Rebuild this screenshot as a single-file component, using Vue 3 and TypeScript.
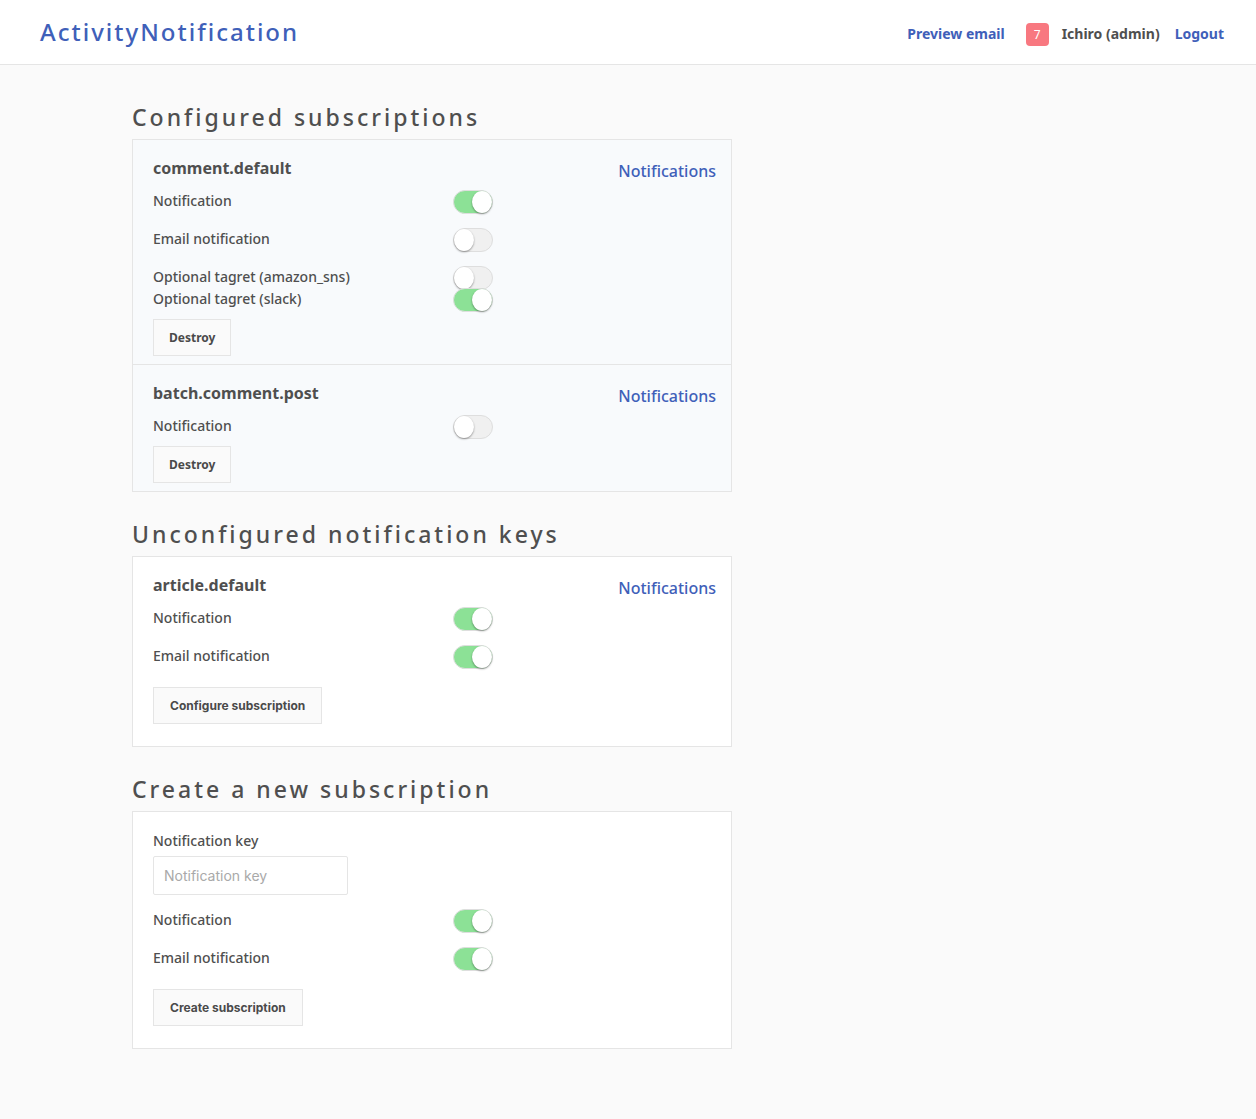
<script setup lang="ts">
import { reactive, ref } from 'vue'

interface Option {
  id: string
  label: string
  on: boolean
}

interface Subscription {
  key: string
  options: Option[]
  targets: Option[]
}

const configured = reactive<Subscription[]>([
  {
    key: 'comment.default',
    options: [
      { id: 'comment-notification', label: 'Notification', on: true },
      { id: 'comment-email', label: 'Email notification', on: false },
    ],
    targets: [
      { id: 'comment-sns', label: 'Optional tagret (amazon_sns)', on: false },
      { id: 'comment-slack', label: 'Optional tagret (slack)', on: true },
    ],
  },
  {
    key: 'batch.comment.post',
    options: [{ id: 'batch-notification', label: 'Notification', on: false }],
    targets: [],
  },
])

const unconfigured = reactive<Subscription[]>([
  {
    key: 'article.default',
    options: [
      { id: 'article-notification', label: 'Notification', on: true },
      { id: 'article-email', label: 'Email notification', on: true },
    ],
    targets: [],
  },
])

const newOptions = reactive<Option[]>([
  { id: 'new-notification', label: 'Notification', on: true },
  { id: 'new-email', label: 'Email notification', on: true },
])

const newKey = ref('')
const unread = ref(7)
</script>

<template>
  <div class="page">
    <header class="header">
      <a class="brand" href="#">ActivityNotification</a>
      <nav class="nav">
        <a href="#">Preview email</a>
        <span class="badge">{{ unread }}</span>
        <span class="user">Ichiro (admin)</span>
        <a href="#">Logout</a>
      </nav>
    </header>

    <main class="main">
      <section>
        <h1>Configured subscriptions</h1>
        <div class="panel">
          <form v-for="sub in configured" :key="sub.key" class="item configured" @submit.prevent>
            <div class="item-head">
              <h2>{{ sub.key }}</h2>
              <a href="#">Notifications</a>
            </div>
            <div class="fields">
              <div v-for="opt in sub.options" :key="opt.id" class="field">
                <label :for="opt.id">{{ opt.label }}</label>
                <input :id="opt.id" v-model="opt.on" class="switch" type="checkbox" />
              </div>
              <div v-if="sub.targets.length">
                <div v-for="opt in sub.targets" :key="opt.id" class="field">
                  <label :for="opt.id">{{ opt.label }}</label>
                  <input :id="opt.id" v-model="opt.on" class="switch" type="checkbox" />
                </div>
              </div>
            </div>
            <button class="destroy" type="submit">Destroy</button>
          </form>
        </div>
      </section>

      <section>
        <h1>Unconfigured notification keys</h1>
        <div class="panel">
          <form v-for="sub in unconfigured" :key="sub.key" class="item" @submit.prevent>
            <div class="item-head">
              <h2>{{ sub.key }}</h2>
              <a href="#">Notifications</a>
            </div>
            <div class="fields">
              <div v-for="opt in sub.options" :key="opt.id" class="field">
                <label :for="opt.id">{{ opt.label }}</label>
                <input :id="opt.id" v-model="opt.on" class="switch" type="checkbox" />
              </div>
            </div>
            <button class="submit" type="submit">Configure subscription</button>
          </form>
        </div>
      </section>

      <section>
        <h1>Create a new subscription</h1>
        <div class="panel">
          <form class="item" @submit.prevent>
            <div class="key-field">
              <label for="new-key">Notification key</label>
              <input id="new-key" v-model="newKey" type="text" placeholder="Notification key" />
            </div>
            <div class="fields">
              <div v-for="opt in newOptions" :key="opt.id" class="field">
                <label :for="opt.id">{{ opt.label }}</label>
                <input :id="opt.id" v-model="opt.on" class="switch" type="checkbox" />
              </div>
            </div>
            <button class="submit" type="submit">Create subscription</button>
          </form>
        </div>
      </section>
    </main>
  </div>
</template>

<style>
body {
  background: #fafafa;
}
</style>

<style scoped>
.page {
  color: #4f4f4f;
  font-family: "Noto Sans", "Open Sans", sans-serif;
  font-size: 14px;
  font-weight: 500;
  line-height: 22px;
}

a {
  color: #3f60b9;
  text-decoration: none;
}

.header {
  display: flex;
  align-items: center;
  justify-content: space-between;
  height: 64px;
  padding: 0 32px 0 40px;
  background: #fff;
  border-bottom: 1px solid #e5e5e5;
}

.brand {
  font-size: 24px;
  line-height: 32px;
  letter-spacing: 2px;
}

.nav {
  display: flex;
  align-items: center;
  padding-top: 4px;
  font-weight: 700;
}

.badge {
  width: 23px;
  margin: 0 13px 0 21px;
  border-radius: 4px;
  background: #f87880;
  color: #fff;
  font-size: 12px;
  font-weight: 400;
  line-height: 23px;
  text-align: center;
}

.user {
  margin-right: 15px;
}

.main {
  display: flex;
  flex-direction: column;
  gap: 26px;
  max-width: 992px;
  margin: 0 auto;
  padding: 36px 0 70px;
}

h1 {
  margin: 0 0 6px;
  font-size: 23px;
  font-weight: 500;
  line-height: 32px;
  letter-spacing: 3px;
}

.panel {
  box-sizing: border-box;
  max-width: 600px;
  border: 1px solid #e5e5e5;
  background: #fff;
}

.item {
  padding: 16px 20px 22px;
}

.item + .item {
  border-top: 1px solid #e5e5e5;
}

.configured {
  padding-bottom: 8px;
  background: #f8fafc;
}

.item-head {
  display: flex;
  justify-content: space-between;
  margin: 0 -5px 10px 0;
  font-size: 16px;
  line-height: 24px;
}

.item-head a {
  height: 18px;
  padding-top: 3px;
}

h2 {
  margin: 0;
  font-size: 16px;
  font-weight: 700;
  line-height: 24px;
}

.fields {
  display: flex;
  flex-direction: column;
  gap: 16px;
}

.field {
  display: flex;
  height: 22px;
}

.field label {
  width: 300px;
}

.switch {
  position: relative;
  box-sizing: border-box;
  flex: none;
  width: 40px;
  height: 24px;
  margin: 0;
  appearance: none;
  border: 1px solid #dedede;
  border-radius: 12px;
  background: #f0f0f0;
}

.switch::before {
  content: "";
  position: absolute;
  top: 0;
  left: 0;
  width: 20px;
  height: 22px;
  border-radius: 50%;
  background: #fff;
  box-shadow: 0 1px 2px rgba(0, 0, 0, 0.4);
}

.switch:checked {
  background: #8ce196;
}

.switch:checked::before {
  left: 18px;
}

button {
  display: block;
  height: 37px;
  padding: 0 15px;
  border: 1px solid #e5e5e5;
  background: #fafafa;
  color: #4a4a4a;
  font-size: 12px;
  font-weight: 700;
}

.destroy {
  margin-top: 9px;
  font-family: "Noto Sans", "Open Sans", sans-serif;
}

.submit {
  margin-top: 20px;
  padding: 0 16px;
  font-family: Inter, sans-serif;
}

.key-field {
  display: flex;
  flex-direction: column;
  align-items: flex-start;
  gap: 4px;
  margin: 2px 0 14px;
}

.key-field input {
  box-sizing: border-box;
  width: 195px;
  height: 39px;
  padding: 0 10px;
  border: 1px solid #e5e5e5;
  border-radius: 2px;
  background: #fff;
  color: #4f4f4f;
  font-family: Inter, sans-serif;
  font-size: 14px;
}

.key-field input::placeholder {
  color: #a9a9a9;
}
</style>
